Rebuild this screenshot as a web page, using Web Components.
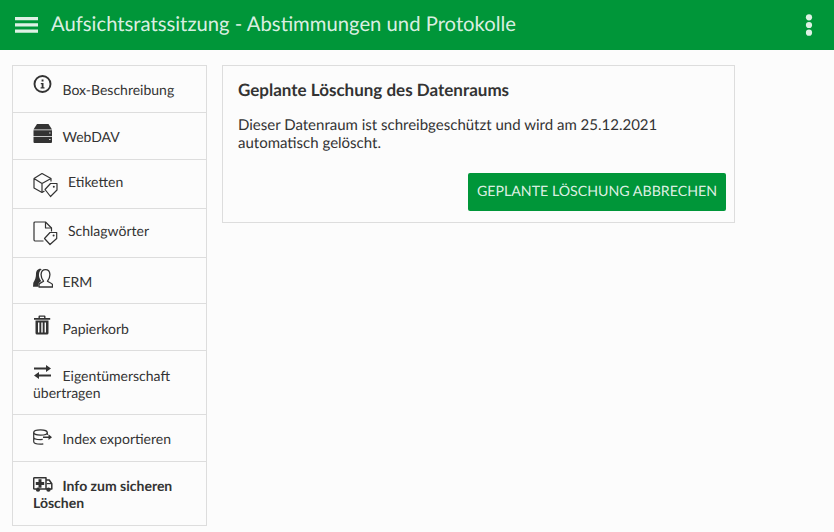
<!DOCTYPE html>
<html lang="de"><head><meta charset="utf-8"><title>Abstimmungen und Protokolle</title>
<style>
html,body{margin:0;padding:0;background:#fcfcfc;height:100%;overflow:hidden}
body{font-family:Lato,"Noto Sans",sans-serif;color:#333;text-rendering:geometricPrecision}
</style></head><body>
<app-shell>
  <app-header slot="header" title-text="Aufsichtsratssitzung - Abstimmungen und Protokolle"></app-header>
  <side-nav slot="nav">
    <nav-row pt="15" pb="14" drop="0"><svg slot="icon" width="20" height="20" viewBox="0 0 20 20"><circle cx="9.500" cy="9" r="8" fill="none" stroke="#333" stroke-width="1.900"/><path d="M7.800 8h2.700v4.300h1v1.300H7.600v-1.300h1.100V9.300h-.9zM8.600 4.400h1.900v2H8.600z" fill="#333"/></svg><span>Box-Beschreibung</span></nav-row>
    <nav-row pt="15" pb="14" drop="1"><svg slot="icon" width="20" height="20" viewBox="0 0 20 20"><path d="M4 1h11.500L19 6.500H.5z" fill="#333"/><path d="M.5 7.300h18.500V13H.5zM.5 13.800h18.500V19a1 1 0 0 1-1 1H1.500a1 1 0 0 1-1-1z" fill="#333"/><path d="M16 9.500h1.600v1H16zM16 16h1.600v1H16z" fill="#ccc"/></svg>WebDAV</nav-row>
    <nav-row pt="13" pb="18" drop="11" gap="9"><svg slot="icon" width="26" height="26" viewBox="0 0 26 26"><g fill="none" stroke="#333" stroke-width="1.200" stroke-linejoin="round"><path d="M1 6.500 9 1.500l9 5-9 5zM1 6.500V16l8 4.500 2.500-1.500M9 11.500V20.500M18 6.500v3"/><path d="M12 17.500 17.500 11.500 24 11.500V18L17.500 24.500z"/></g><circle cx="20.800" cy="14.800" r="1" fill="#333"/></svg>Etiketten</nav-row>
    <nav-row pt="13" pb="18" drop="11" gap="9"><svg slot="icon" width="26" height="26" viewBox="0 0 26 26"><g fill="none" stroke="#333" stroke-width="1.200" stroke-linejoin="round"><path d="M10.500 20H2a1.200 1.200 0 0 1-1-1.200V2a1 1 0 0 1 1-1h10.500l6 6v3.500"/><path d="M12.500 1v6h6"/><path d="M11.500 17.500 17 11.500H23.700V17.500L17 23.500z"/></g><circle cx="20.600" cy="14.600" r="1" fill="#333"/></svg>Schlagwörter</nav-row>
    <nav-row pt="15" pb="13" drop="1"><svg slot="icon" width="20" height="20" viewBox="0 0 20 20"><path d="M7.500.8C4.500.8 3 3.300 3 6c0 3-.8 5.800-2.700 8.800L0 18.800h5.500v-2c0-1.700 1.600-2.800 2.700-3.700C6.500 10.800 5.700 8.300 6 6c.2-2 1.200-4 2.800-4.800Z" fill="#333"/><path d="M6 19h13.500v-2.300c0-1.500-3.700-2.300-5-3.500 1.500-2 2.500-4.500 2.400-6.800C16.700 3.300 15 1.600 12.500 1.600S8.300 3.300 8.100 6.400c-.1 2.300.9 4.800 2.400 6.800-1.300 1.200-4.500 2-4.500 3.500z" fill="none" stroke="#333" stroke-width="1.300" stroke-linejoin="round"/></svg>ERM</nav-row>
    <nav-row pt="16" pb="13" drop="1"><svg slot="icon" width="20" height="20" viewBox="0 0 20 20"><path d="M6.500.5h5a1 1 0 0 1 1 1V3h4.700v1.700H1V3h4.500V1.500a1 1 0 0 1 1-1zm.4 1.300V3h4.200V1.800z" fill="#333"/><path d="M2.500 5.500h13V18a1.500 1.500 0 0 1-1.500 1.500H4A1.500 1.500 0 0 1 2.500 18z" fill="#333"/><path d="M5 7.500h1.400v10H5zM8.300 7.500h1.400v10H8.300zM11.600 7.500H13v10h-1.400z" fill="#fcfcfc"/></svg>Papierkorb</nav-row>
    <nav-row pt="16" pb="13" drop="0"><svg slot="icon" width="20" height="20" viewBox="0 0 20 20"><path d="M1 6.500H13V4L18 7.500 13 11V8.500H1z" fill="#333"/><path d="M18 13.500H6V11L1 14.500 6 18V15.500H18z" fill="#333"/></svg>Eigentümerschaft übertragen</nav-row>
    <nav-row pt="15" pb="14" drop="1"><svg slot="icon" width="20" height="20" viewBox="0 0 20 20"><g fill="none" stroke="#333" stroke-width="1.200"><ellipse cx="7.500" cy="7.500" rx="6.800" ry="2.600"/><path d="M.7 7.500V16.500c0 1.500 3 2.600 6.800 2.600 1 0 2-.1 2.800-.3M.7 12c0 1.500 3 2.600 6.800 2.600.8 0 1.500-.05 2.200-.15M14.300 7.500V10"/></g><path d="M10 11.500h6v1.400h-6zM15.500 9.300l3.500 2.900-3.500 2.900z" fill="#333"/></svg>Index exportieren</nav-row>
    <nav-row pt="15" pb="14" drop="1" strong><svg slot="icon" width="20" height="20" viewBox="0 0 20 20"><g fill="none" stroke="#333" stroke-width="1.500" stroke-linejoin="round"><path d="M3 17H1.500a.8.800 0 0 1-.8-.8V6.500a.8.800 0 0 1 .8-.8H13V17H7M13 8h3.200l2.600 3.700V17H17M13 17h1"/></g><path d="M5.500 7.300h3v2.700h2.700v3H8.500v2.700h-3V13H2.800v-3h2.700z" fill="#333"/><circle cx="5" cy="17.600" r="2.200" fill="#333"/><circle cx="15.500" cy="17.600" r="2.200" fill="#333"/><path d="M13.800 11h4.300v1.200h-4.300z" fill="#333"/></svg>Info zum sicheren Löschen</nav-row>
  </side-nav>
  <info-card slot="main" heading="Geplante Löschung des Datenraums" action="Geplante Löschung abbrechen">Dieser Datenraum ist schreibgeschützt und wird am 25.12.2021 automatisch gelöscht.</info-card>
</app-shell>
<script>
function def(name, css, html, init){
  customElements.define(name, class extends HTMLElement{
    constructor(){super();const r=this.attachShadow({mode:'open'});r.innerHTML='<style>'+css+'</style>'+html;}
    connectedCallback(){if(init)init(this,this.shadowRoot);}
  });
}
def('app-shell',
 ':host{display:block;height:532px}.m{display:flex;align-items:flex-start;gap:15px;padding:15px 0 0 12px}',
 '<slot name="header"></slot><div class="m"><slot name="nav"></slot><slot name="main"></slot></div>');
def('app-header',
 ':host{display:flex;align-items:center;height:50px;background:#009639;color:rgba(255,255,255,.87);padding-left:15px;padding-right:21.5px}'+
 '.t{flex:1;font-size:20.26px;line-height:50px;margin-left:13px;white-space:nowrap;position:relative;top:-1px}svg{display:block}',
 '<svg width="23" height="16" viewBox="0 0 23 16"><path d="M0 0h23v3.200H0zM0 6.300h23v3.200H0zM0 12.600h23v3.200H0z" fill="#fff" fill-opacity=".87"/></svg><div class="t"></div>'+
 '<svg width="8" height="22" viewBox="0 0 8 22"><circle cx="4" cy="3.300" r="3.100" fill="#fff" fill-opacity=".87"/><circle cx="4" cy="11" r="3.100" fill="#fff" fill-opacity=".87"/><circle cx="4" cy="18.700" r="3.100" fill="#fff" fill-opacity=".87"/></svg>',
 (h,r)=>{r.querySelector('.t').textContent=h.getAttribute('title-text');});
def('side-nav',
 ':host{display:block;width:193px;border:1px solid #ddd;border-bottom:0}',
 '<slot></slot>');
def('nav-row',
 ':host{display:block;border-bottom:1px solid #ddd;padding-left:20px;padding-right:10px;font-size:14px;line-height:17px;color:#333}'+
 ':host([strong]){font-weight:700}'+
 '::slotted(svg){vertical-align:baseline}',
 '<slot name="icon"></slot><slot></slot>',
 (h)=>{h.style.paddingTop=h.getAttribute('pt')+'px';h.style.paddingBottom=h.getAttribute('pb')+'px';
   const i=h.querySelector('svg'),d=+h.getAttribute('drop'),H=+i.getAttribute('height');
   i.style.marginTop=(-(H-d))+'px';i.style.marginBottom=(-d)+'px';i.style.marginRight=(h.getAttribute('gap')||'9.5')+'px';});
def('info-card',
 ':host{display:block;box-sizing:border-box;width:513px;height:158px;border:1px solid #ddd;padding:13px 8px 0 15px;color:#333}'+
 'h2{margin:0;font-size:17px;line-height:22px;font-weight:700}'+
 'p{margin:15px 7px 0 0;font-size:15px;line-height:18px}'+
 '.a{display:flex;justify-content:flex-end;margin-top:21px}'+
 'button{font:inherit;font-size:14.2px;line-height:18px;height:38px;padding:0 9px;border:0;border-radius:2px;background:#009639;color:rgba(255,255,255,.87);text-transform:uppercase;text-rendering:geometricPrecision}',
 '<h2></h2><p><slot></slot></p><div class="a"><button></button></div>',
 (h,r)=>{r.querySelector('h2').textContent=h.getAttribute('heading');r.querySelector('button').textContent=h.getAttribute('action');});
</script>
</body></html>
